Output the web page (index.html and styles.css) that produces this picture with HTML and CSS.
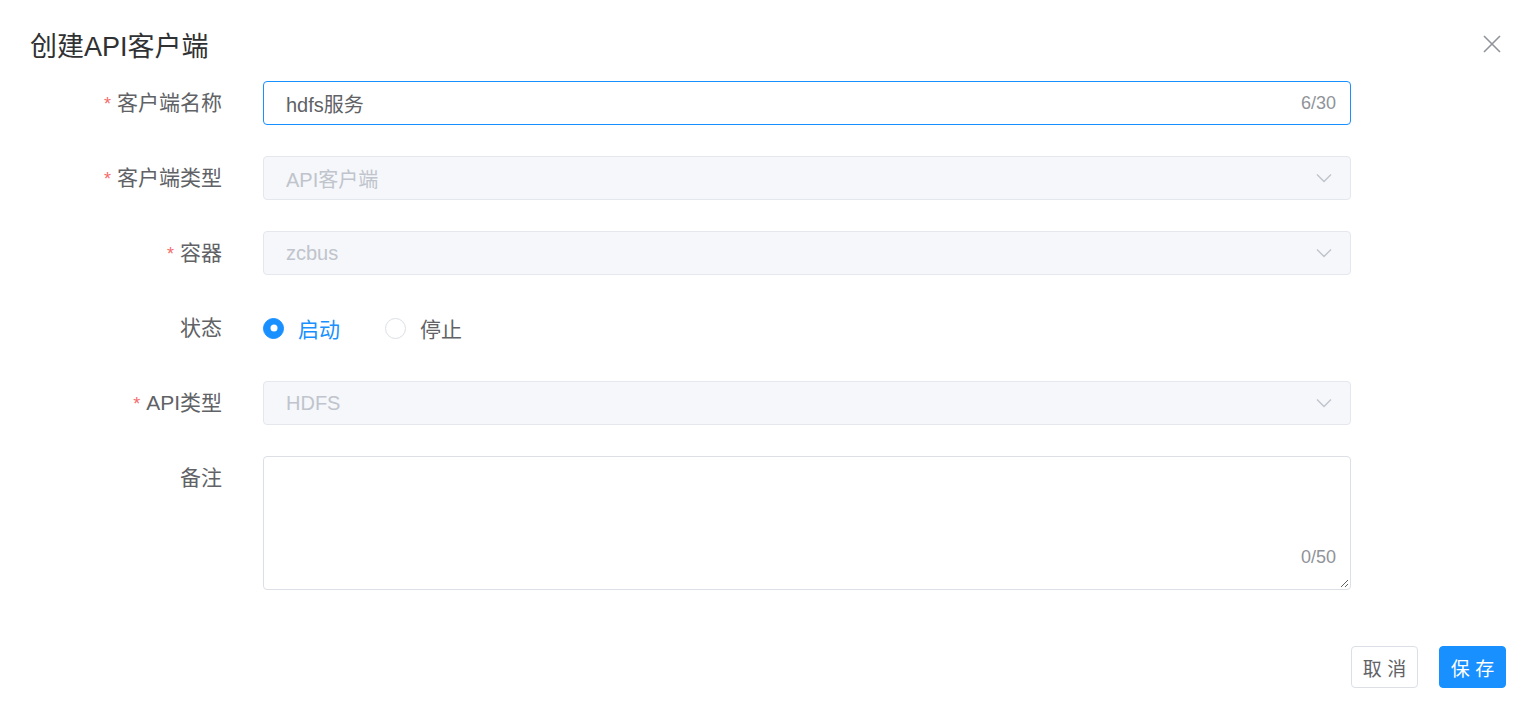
FILE: index.html
```html
<!DOCTYPE html>
<html lang="zh-CN">
<head>
<meta charset="utf-8">
<title>创建API客户端</title>
<link rel="stylesheet" href="styles.css">
</head>
<body>
<div class="dialog">
  <div class="dialog-header">
    <span class="dialog-title">创建API客户端</span>
    <button class="close-btn" aria-label="关闭">
      <svg width="20" height="20" viewBox="0 0 20 20"><path d="M2 2 L18 18 M18 2 L2 18" stroke="#909399" stroke-width="1.6" fill="none"/></svg>
    </button>
  </div>
  <div class="dialog-body">
    <div class="form-row">
      <label class="form-label required">客户端名称</label>
      <div class="form-control">
        <div class="input is-focus">
          <span class="input-value">hdfs服务</span>
          <span class="count">6/30</span>
        </div>
      </div>
    </div>
    <div class="form-row">
      <label class="form-label required">客户端类型</label>
      <div class="form-control">
        <div class="input is-disabled">
          <span class="input-value">API客户端</span>
          <svg class="arrow" width="16" height="10" viewBox="0 0 16 10"><path d="M1 1.5 L8 8.5 L15 1.5" stroke="#c0c4cc" stroke-width="1.4" fill="none"/></svg>
        </div>
      </div>
    </div>
    <div class="form-row">
      <label class="form-label required">容器</label>
      <div class="form-control">
        <div class="input is-disabled">
          <span class="input-value">zcbus</span>
          <svg class="arrow" width="16" height="10" viewBox="0 0 16 10"><path d="M1 1.5 L8 8.5 L15 1.5" stroke="#c0c4cc" stroke-width="1.4" fill="none"/></svg>
        </div>
      </div>
    </div>
    <div class="form-row">
      <label class="form-label">状态</label>
      <div class="form-control radios">
        <span class="radio checked"><span class="radio-inner"></span><span class="radio-label">启动</span></span>
        <span class="radio"><span class="radio-inner"></span><span class="radio-label">停止</span></span>
      </div>
    </div>
    <div class="form-row">
      <label class="form-label required">API类型</label>
      <div class="form-control">
        <div class="input is-disabled">
          <span class="input-value">HDFS</span>
          <svg class="arrow" width="16" height="10" viewBox="0 0 16 10"><path d="M1 1.5 L8 8.5 L15 1.5" stroke="#c0c4cc" stroke-width="1.4" fill="none"/></svg>
        </div>
      </div>
    </div>
    <div class="form-row row-textarea">
      <label class="form-label">备注</label>
      <div class="form-control">
        <div class="textarea">
          <span class="count">0/50</span>
          <svg class="resize" width="10" height="10" viewBox="0 0 10 10"><path d="M9 2 L2 9 M9 6 L6 9" stroke="#606266" stroke-width="1" fill="none"/></svg>
        </div>
      </div>
    </div>
  </div>
  <div class="dialog-footer">
    <button class="btn">取 消</button>
    <button class="btn btn-primary">保 存</button>
  </div>
</div>
</body>
</html>
```
FILE: styles.css
```css
* { box-sizing: border-box; }
html, body { margin: 0; padding: 0; background: #fff; }
body {
  font-family: "Liberation Sans", "Noto Sans CJK SC", sans-serif;
  color: #606266;
}
.dialog { width: 1536px; height: 717px; display: flex; flex-direction: column; }
.dialog-header {
  display: flex; justify-content: space-between; align-items: center;
  padding: 28px 34px 0 30px; height: 66px;
}
.dialog-title { font-size: 27px; color: #303133; line-height: 36px; }
.close-btn { background: none; border: 0; padding: 0; width: 20px; height: 20px; cursor: pointer; margin-top: -6px; }
.close-btn svg { display: block; }
.dialog-body { padding-top: 15px; }
.form-row { display: flex; align-items: flex-start; height: 44px; margin-bottom: 31px; }
.form-row.row-textarea { height: 134px; }
.form-label {
  width: 263px; padding-right: 41px; text-align: right;
  font-size: 21px; line-height: 44px; height: 44px; color: #606266;
}
.form-label.required::before { content: "*"; color: #f56c6c; margin-right: 6px; font-size: 18px; }
.form-control { width: 1088px; }
.input {
  height: 44px; border: 1px solid #dcdfe6; border-radius: 4px;
  display: flex; align-items: center; justify-content: space-between;
  padding: 0 14px 0 22px; font-size: 20px;
}
.input.is-focus { border-color: #1890ff; }
.input-value { color: #606266; }
.input.is-disabled { background: #f5f7fa; border-color: #e4e7ed; }
.input.is-disabled .input-value { color: #c0c4cc; }
.input .arrow { margin-right: 4px; }
.count { color: #909399; font-size: 18px; }
.radios { display: flex; align-items: center; height: 44px; }
.radio { display: flex; align-items: center; margin-right: 45px; font-size: 21px; height: 44px; }
.radio-inner {
  width: 21px; height: 21px; border-radius: 50%; border: 1px solid #dcdfe6;
  background: #fff; position: relative;
}
.radio.checked .radio-inner { background: #1890ff; border-color: #1890ff; }
.radio.checked .radio-inner::after {
  content: ""; position: absolute; left: 50%; top: 50%; width: 7px; height: 7px;
  border-radius: 50%; background: #fff; transform: translate(-50%, -50%);
}
.radio-label { padding-left: 14px; color: #606266; }
.radio.checked .radio-label { color: #1890ff; }
.textarea {
  height: 134px; border: 1px solid #dcdfe6; border-radius: 4px; position: relative;
}
.textarea .count { position: absolute; right: 14px; bottom: 21px; }
.textarea .resize { position: absolute; right: 1px; bottom: 1px; }
.dialog-footer {
  margin-top: auto; display: flex; justify-content: flex-end; gap: 21px;
  padding: 0 30px 29px 0;
}
.btn {
  width: 67px; height: 42px; padding: 0; font-size: 19px; border-radius: 4px;
  border: 1px solid #dcdfe6; background: #fff; color: #606266;
  font-family: "Liberation Sans", "Noto Sans CJK SC", sans-serif;
}
.btn-primary { background: #1890ff; border-color: #1890ff; color: #fff; }
```
